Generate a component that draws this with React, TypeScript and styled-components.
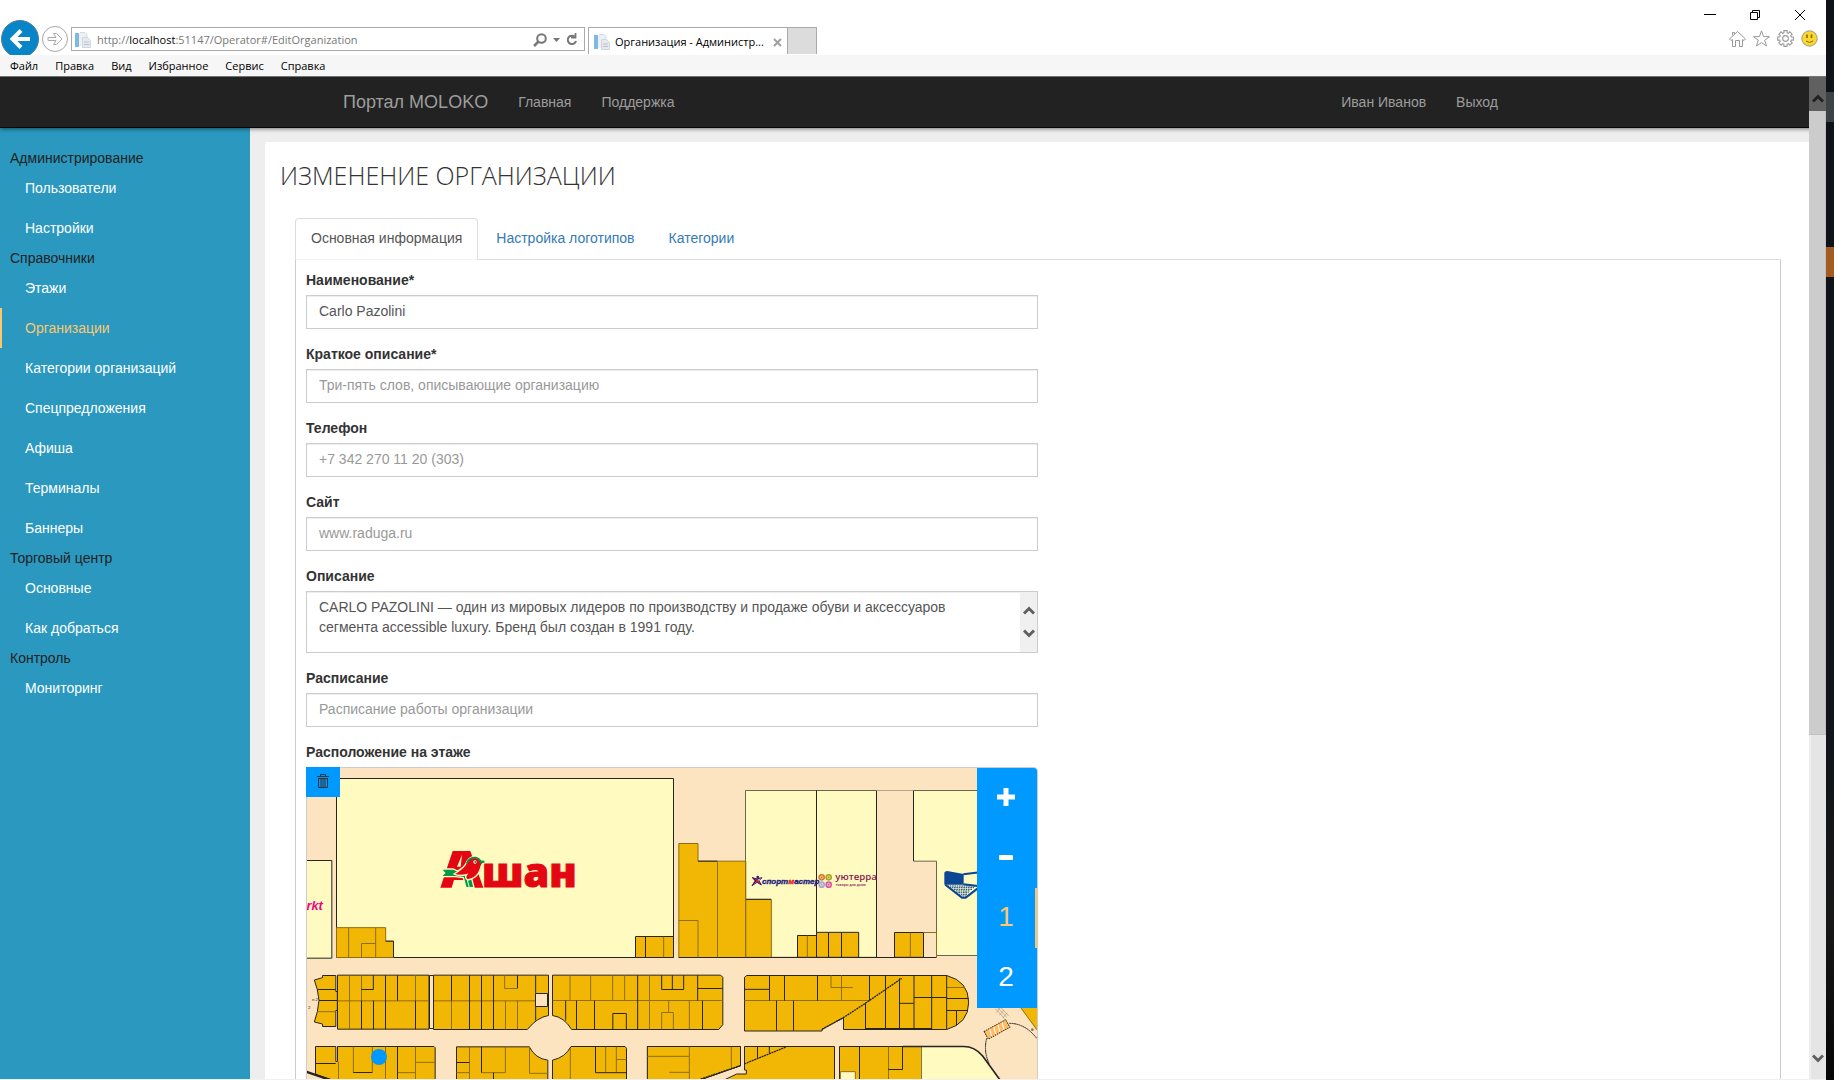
import React from "react";
import styled, { createGlobalStyle, css } from "styled-components";

const UI_FONT = '"Open Sans", "Noto Sans", sans-serif';
const PAGE_FONT = '"Liberation Sans", Arial, sans-serif';

const GlobalStyle = createGlobalStyle`
  *, *::before, *::after { box-sizing: border-box; }
  html, body, #root { height: 100%; }
  body { margin: 0; overflow: hidden; font: 14px/20px ${PAGE_FONT}; color: #333; background: #fff; }
  button, input, textarea { font: inherit; }
  a { text-decoration: none; }
`;

/* ---------- desktop and browser window ---------- */

const Desktop = styled.div`
  display: flex;
  height: 100vh;
`;

const Wallpaper = styled.div`
  flex: 0 0 8px;
  background:
    linear-gradient(#3c4346, #3c4346) 0 92px / 100% 30px no-repeat,
    linear-gradient(#a35c22, #a35c22) 0 247px / 100% 30px no-repeat,
    linear-gradient(#0d1318, #0f151a 70%, #181818 85%, #050505);
`;

const Browser = styled.div`
  flex: 1;
  min-width: 0;
  display: flex;
  flex-direction: column;
  border-bottom: 1px solid #f0f0f0;
`;

const TitleBar = styled.header`
  flex: 0 0 55px;
  display: flex;
  justify-content: space-between;
  background: #fff;
  font: 11px/16px ${UI_FONT};
  overflow: hidden;
`;

const Toolbar = styled.div`
  display: flex;
  align-items: flex-start;
  padding: 20px 0 0 1px;
`;

const RoundButton = styled.button<{ $size: number; $primary?: boolean }>`
  flex: none;
  display: grid;
  place-items: center;
  width: ${(p) => p.$size}px;
  height: ${(p) => p.$size}px;
  padding: 0;
  border-radius: 50%;
  border: 1px solid ${(p) => (p.$primary ? "#4b7f9c" : "#a8a8a8")};
  background: ${(p) => (p.$primary ? "#0785c7" : "#fff")};
  margin: ${(p) => (p.$primary ? "0" : "6px 3px 0 3px")};
`;

const AddressBar = styled.form`
  display: flex;
  align-items: center;
  gap: 6px;
  width: 514px;
  height: 24px;
  margin: 7px 3px 0 0;
  padding: 1px 6px 0 3px;
  border: 1px solid #aaa;
  background: #fff;
`;

const Url = styled.div`
  flex: 1;
  color: #777;
  white-space: nowrap;
  b { font-weight: 400; color: #000; }
`;

const PlainButton = styled.button`
  display: grid;
  place-items: center;
  padding: 0;
  border: 0;
  background: none;
  color: #777;
`;

const Tab = styled.div`
  display: flex;
  align-items: center;
  gap: 5px;
  width: 200px;
  height: 27px;
  margin-top: 7px;
  padding: 2px 5px 0;
  border: solid #aaa;
  border-width: 1px 1px 0;
  color: #000;
`;

const TabTitle = styled.span`
  flex: 1;
  white-space: nowrap;
`;

const NewTab = styled.button`
  width: 29px;
  height: 27px;
  margin-top: 7px;
  padding: 0;
  border: solid #aaa;
  border-width: 1px 1px 0 0;
  background: #dcdcdc;
`;

const WindowSide = styled.div`
  display: flex;
  flex-direction: column;
  align-items: flex-end;
  justify-content: space-between;
  padding: 8px 8px 8px 0;
`;

const WindowControls = styled.div`
  display: flex;
  gap: 33px;
  padding-right: 12px;
`;

const BrowserTools = styled.div`
  display: flex;
  gap: 7px;
`;

const MenuBar = styled.nav`
  flex: 0 0 22px;
  display: flex;
  align-items: center;
  gap: 17px;
  padding-left: 10px;
  background: #f6f6f6;
  border-bottom: 1px solid #707573;
  font: 11px/16px ${UI_FONT};
`;

const MenuItem = styled.button`
  padding: 0;
  border: 0;
  background: none;
  color: #000;
`;

/* ---------- page ---------- */

const Viewport = styled.div`
  position: relative;
  flex: 1;
  min-height: 0;
  display: flex;
  flex-direction: column;
  overflow: hidden;
`;

const Navbar = styled.header`
  flex: none;
  z-index: 1;
  background: #222;
  border-bottom: 1px solid #080808;
  box-shadow: 0 1px 4px rgba(0, 0, 0, 0.5);
`;

const NavContainer = styled.div`
  display: flex;
  align-items: center;
  gap: 30px;
  max-width: 1170px;
  height: 50px;
  margin: 0 auto;
  padding-left: 15px;
`;

const Brand = styled.a`
  font-size: 18px;
  color: #9d9d9d;
`;

const NavLink = styled.a<{ $push?: boolean }>`
  color: #9d9d9d;
  ${(p) => p.$push && "margin-left: auto;"}
`;

const Body = styled.div`
  flex: 1;
  min-height: 0;
  display: flex;
  padding-right: 17px;
  background: #eee;
`;

const Sidebar = styled.nav`
  flex: 0 0 250px;
  padding-top: 20px;
  background: #2a98bf;
`;

const SideHeading = styled.div`
  padding-left: 10px;
  color: #222;
`;

const SideLink = styled.a<{ $active?: boolean }>`
  display: block;
  height: 40px;
  padding-left: 23px;
  line-height: 40px;
  color: ${(p) => (p.$active ? "#f9c870" : "#fff")};
  border-left: 2px solid ${(p) => (p.$active ? "#f9c870" : "transparent")};
`;

const Panel = styled.main`
  flex: 1;
  min-width: 0;
  margin: 14px 0 0 15px;
  padding: 16px 28px 0 15px;
  background: #fff;
  border-radius: 3px 0 0 0;
  overflow: hidden;
`;

const Title = styled.h1`
  margin: 0 0 25px;
  font: 300 25px/35px ${UI_FONT};
  color: #333;
`;

const TabList = styled.div`
  display: flex;
  gap: 2px;
  margin-left: 15px;
  border-bottom: 1px solid #ddd;
`;

const PageTab = styled.button<{ $active?: boolean }>`
  height: 42px;
  margin-bottom: -1px;
  padding: 0 15px 2px;
  border: 1px solid transparent;
  border-radius: 4px 4px 0 0;
  background: none;
  color: #337ab7;
  ${(p) =>
    p.$active &&
    css`
      color: #555;
      background: #fff;
      border-color: #ddd #ddd #f4f4f4;
    `}
`;

const TabPanel = styled.section`
  margin-left: 15px;
  padding: 10px;
  border: solid #ccc;
  border-width: 0 1px;
`;

const Form = styled.form`
  width: 50%;
`;

const Field = styled.div`
  margin-bottom: 15px;
`;

const labelStyle = css`
  display: block;
  margin-bottom: 5px;
  font-weight: 700;
  color: #333;
`;

const Label = styled.label`
  ${labelStyle}
`;

const MapLabel = styled.div`
  ${labelStyle}
`;

const boxStyle = css`
  border: 1px solid #ccc;
  background: #fff;
  box-shadow: inset 0 1px 1px rgba(0, 0, 0, 0.075);
`;

const TextInput = styled.input`
  ${boxStyle}
  display: block;
  width: 100%;
  height: 34px;
  padding: 0 12px 2px;
  border-radius: 0;
  color: #555;
  outline: 0;
  &::placeholder { color: #999; opacity: 1; }
`;

const TextAreaBox = styled.div`
  ${boxStyle}
  display: flex;
  height: 62px;
`;

const TextArea = styled.textarea`
  flex: 1;
  min-width: 0;
  padding: 5px 12px;
  border: 0;
  outline: 0;
  resize: none;
  overflow: hidden;
  background: none;
  color: #555;
`;

const TextScroller = styled.div`
  flex: 0 0 17px;
  display: flex;
  flex-direction: column;
  align-items: center;
  justify-content: center;
  gap: 14px;
  background: #f0f0f0;
  color: #606060;
`;

/* ---------- page scrollbar ---------- */

const Scrollbar = styled.div`
  position: absolute;
  z-index: 2;
  inset: 0 0 0 auto;
  width: 17px;
  display: grid;
  grid-template-rows: 34px 624fr 310fr 34px;
  background: #e5e5e5;
  border-left: 2px solid #eee;
`;

const ScrollUp = styled.div`
  margin-left: -2px;
  display: grid;
  place-items: center;
  padding-top: 8px;
  background: #606060;
  color: #222;
`;

const Thumb = styled.div`
  margin-left: -2px;
  background: #ccc;
  border: solid #c0c0c0;
  border-width: 0 1px 1px 0;
`;

const ScrollDown = styled.div`
  grid-row: 4;
  display: grid;
  place-items: center;
  padding: 0 2px 8px 0;
  color: #606060;
`;

/* ---------- map ---------- */

const MapFrame = styled.div`
  position: relative;
  height: 402px;
  border: 1px solid #ccc;
  border-radius: 0 4px 0 0;
`;

const MapSvg = styled.svg`
  display: block;
  width: 100%;
  height: 100%;
`;

const DeleteButton = styled.button`
  position: absolute;
  top: -1px;
  left: -1px;
  display: grid;
  place-items: center;
  width: 34px;
  height: 30px;
  padding: 0 0 3px;
  border: 0;
  background: #09f;
`;

const MapControls = styled.div`
  position: absolute;
  top: 0;
  right: 0;
  width: 60px;
  background: #09f;
  border-radius: 0 3px 0 0;
`;

const MapButton = styled.button<{ $active?: boolean }>`
  display: grid;
  place-items: center;
  width: 60px;
  height: 60px;
  padding: 0 0 2px;
  border: 0;
  border-right: 2px solid ${(p) => (p.$active ? "#f9c870" : "transparent")};
  background: none;
  color: ${(p) => (p.$active ? "#f9c870" : "#fff")};
  font-size: 28px;
  line-height: 32px;
`;

/* ---------- icons ---------- */

const Chevron = ({ down }: { down?: boolean }) => (
  <svg width="12" height="9" viewBox="0 0 12 9" fill="none" stroke="currentColor" strokeWidth="3">
    <path d={down ? "M1 1.5 6 6.5 11 1.5" : "M1 7.5 6 2.5 11 7.5"} />
  </svg>
);

const PageIcon = () => (
  <svg width="16" height="16" viewBox="0 0 16 16">
    <path d="M0 1h4v14H0z" fill="#7fb9e2" />
    <path d="M4 1h8v13H4z" fill="#edf1f5" />
    <path d="M5 .5h5l2 2V8" fill="none" stroke="#d5dae0" />
    <path d="M7.500 5.500h5l3 3v7h-8z" fill="#e6eaef" stroke="#d0d6dd" />
    <path d="M9 10h5M9 12.500h5" stroke="#b9c2cc" />
  </svg>
);

const TrashIcon = () => (
  <svg width="12" height="14" viewBox="0 0 12 14" fill="none" stroke="#333">
    <path d="M0 2.500h12M3.500 2V.5h5V2M1.500 4v9.500h9V4M1 4.500h10" />
    <path d="M4 5v8M6 5v8M8 5v8" />
  </svg>
);

const gearPath = (() => {
  const pts: string[] = [];
  for (let i = 0; i < 8; i++) {
    const a = (i * Math.PI) / 4;
    [[-0.27, 5.6], [-0.2, 7.5], [0.2, 7.5], [0.27, 5.6]].forEach(([d, r]) =>
      pts.push(`${(8 + r * Math.sin(a + d)).toFixed(1)} ${(8 - r * Math.cos(a + d)).toFixed(1)}`)
    );
  }
  return `M${pts.join("L")}Z`;
})();

/* ---------- floor plan ---------- */

const GOLD = "#f2b705";
const PALE = "#fffac0";
const FLOOR = "#fde4c0";
const INK = "#262522";
const SEAM = "#8f6e0c";

const WestWing = () => (
  <g strokeWidth="3">
    <path d="M140 85.500H1150.500V622.500H139.500V85.500M40 331.500H125.500V624.500H40" fill={PALE} stroke={INK} />
    <g fill={GOLD} stroke={INK}>
      <path d="M139.500 533V622.500H310.500V573.500H287V533z" stroke={SEAM} />
      <path d="M1036.500 559.500H1150.500V622.500H1036.500z" />
      <path d="M97.500 676.500H137.500V724.500H142V781.500H137.500V829.500H97.500V822L73 816 82 785 87 751 82 719 73 690 97.500 683z" />
      <path d="M142.500 675.500H417V837.500H142.500z" />
      <path d="M430.500 675.500H775.500V796.500Q741 802 712 838.500H430.500z" />
      <path d="M787.500 675.500H1292L1298.500 682V824L1286 838.500H845Q822 801 787.500 796.500z" />
      <path d="M76.500 889.500H137.500V934.500H142.500V889.500H432L435.500 893V1010H180L76.500 973z" />
      <path d="M499.500 890.500H718Q736 926 773.500 930.500V1010H499.500z" />
      <path d="M787.500 1010V930.500Q826 922 843 889.500H1005L1009.500 895V1010z" />
      <path d="M1072.500 889.500H1351.500V947L1200 1000H1072.500z" />
    </g>
    <path
      fill="none"
      stroke={SEAM}
      d="M176 533V622M257 533V622M214.500 622V580.500H257M1121 560V622
      M82 785H137M142 752.500H417M178.500 676V838M214.500 676V838M376.500 676V838
      M430 752.500H737M646.500 752V838M484.500 752V838M644 676V715.500H682M682.500 752V838
      M788 751.500H1298M840 676V752M902 676V752M968 676V752M1004 676V752M1078.500 676V838M1136 752V787M1115 838V787.500H1150V838M1198 752V838
      M145.500 935V990M190 890V968M286.500 890V990M376.500 890V990M376 937H435M322 968H376M247 890V968
      M538.500 890V990M499 968H538M574 968H646V890M718.500 890V970H773M841 895V990M947 890V968M979 890V968M979 928.500H1009
      M1072 919H1198M1138 967H1198M1198.500 890V990M1324 890V957"
    />
    <path
      fill="none"
      stroke={INK}
      d="M287 573.500H310.500V622M1066.500 560V622M82 718.500H137M87 751.500H142
      M214 718.500H250V676M250.500 752V838M286.500 676V838M322.500 676V752M376.500 752V838M214.500 752V838
      M484.500 676V752M538.500 676V838M574.500 676V838M610.500 676V838M682.500 676V715M737 676V730M737 769V812
      M827 752V812M859.500 752V838M913.500 752V838M968.500 838V790.500H1009V838M1043 676V838M1115 676V718.500H1181V676M1147 676V718M1223 676V752M1223 715.500H1298M1237.500 752V838
      M76 940.500H137M190 967.500H247M322.500 890V990M499 937.500H538M574.500 890V968M610.500 968V990
      M916.500 890V968H1009M1072 955.500H1138V990"
    />
    <path d="M418.500 676.500H430.500V835.500H418.500z" fill={FLOOR} stroke={INK} />
    <path d="M736.500 730.500H772.500V769.500H736.500z" fill={FLOOR} stroke={INK} />
    <path d="M48 965 130 993" stroke={INK} strokeWidth="7" />
    <text x="98" y="480" textAnchor="end" fontFamily={PAGE_FONT} fontSize="38" fontWeight="700" fontStyle="italic" fill="#ec008c">
      rkt
    </text>
    <text x="84" y="752" textAnchor="end" fontFamily={PAGE_FONT} fontSize="13" fill={INK}>н.2</text>
    <text x="54" y="776" fontFamily={PAGE_FONT} fontSize="13" fill={INK}>2</text>
  </g>
);

const EastWing = () => (
  <g strokeWidth="3" transform="translate(1140 0)">
    <path d="M226.500 121.500H619.500V622H226.500zM1000 121.500H730.500V333.500H799.500V616.500H1000" fill={PALE} stroke="#6b6650" />
    <path d="M439.500 121V622M619.500 121V622M730.500 121V333" stroke={INK} />
    <path d="M620 121.500H730" stroke="#b5a58c" />
    <g fill={GOLD} stroke={INK}>
      <path d="M26.500 280.500H84V333.500H227V622.500H26.500z" stroke={SEAM} />
      <path d="M227 448H304V622H227z" stroke={SEAM} />
      <path d="M382.500 556.500H439.500V622H382.500zM439.500 547H566V622H439.500zM673.500 547.500H760.500V622H673.500z" />
      <path d="M223.500 682 230 676.500H830Q896 694 896 757T830 838.500H520.500V803L456 838V843H223.500z" />
      <path d="M-68 889.500H211.500V947L90 990H-68z" />
      <path d="M223.500 889.500H493.500V1010H120L200 972H229V960H223.500z" />
      <path d="M508.500 889.500H755V1010H508.500z" />
    </g>
    <path d="M26 622.500H800M84 333.500H142M228 448H303" stroke={INK} fill="none" />
    <path
      fill="none"
      stroke={SEAM}
      d="M26 511.500H84V622M142.500 334V622M412 557V622M721 548V622M761 547.500H799.500V622.500
      M223 751.500H598M514.500 676V752M483 676V712.500H548M830 712.500H884M-68 919H58M-2 967H58M58 890V990M184 890V955M655.500 890V990M227 334V622"
    />
    <path
      fill="none"
      stroke={INK}
      d="M475.500 547V622M514.500 547V622
      M298.500 676V752M343.500 676V752M442.500 676V752M223 718H298M319.500 752V842M370.500 752V842M598.500 676V752M646.500 676V838M586.500 760V838
      M688.500 685V838M688 760H731M732 676V838M785 676V838M830 676V838M732 742.500H830M830 745.500H896M830 781.500H893M859.500 781V826M586 835.500H785
      M262.500 890V925M298 890V910M568.500 890V990M697.500 890V958.500H655"
    />
    <path d="M456 838 520 803 586 760 695 685M223 942 348 891M92 987 211 947" fill="none" stroke={INK} strokeWidth="4" strokeDasharray="6 2" />
    <path d="M511 965H556V1010H511z" fill={PALE} stroke={SEAM} />
    <path d="M755 891H880Q912 891 938 920L988 987 1010 1020H755z" fill={PALE} />
    <path d="M698 889.500H880Q914 889 938 918L988 987 1005 1010" fill="none" stroke={INK} strokeWidth="5" />
    <path d="M950 865Q940 905 958 942M1018 820Q1066 820 1101 866" fill="none" stroke={INK} strokeDasharray="6 1" />
    <path d="M1050 770H1105V845z" fill={GOLD} stroke={SEAM} />
    <g transform="rotate(-29 981 838)">
      <path d="M944 825H1018V851H944z" fill="#ffbd63" stroke={INK} strokeDasharray="4 3" />
      <path d="M957 848 962 828M971 848 976 828M985 848 990 828M999 848 1004 828" stroke="#fff" />
    </g>
    <path d="M976 776 1004 806M984 774 1010 802M992 772 1016 798M978 788 992 772M988 796 1002 780M998 804 1012 788" stroke="#a99a86" fill="none" strokeWidth="2" />
    <circle cx="1087" cy="839" r="4" fill="#8a7450" />
  </g>
);

const AuchanLogo = () => (
  <g>
    <g fill="#e30613" fontFamily={UI_FONT} fontWeight="800">
      <path d="M451 413 488 303H541L580 413H540L533 390H492L485 413zM501 350H512L516 314z" fillRule="evenodd" />
      <text x="576" y="412" fontSize="124" stroke="#e30613" strokeWidth="3">шан</text>
    </g>
    <path d="M453 357H489L503 363 530 345 534 385H545L552 413H528L520 383 496 380H453L464 369z" fill="#009b48" stroke={PALE} strokeWidth="4" />
    <path d="M531 386 538 413" stroke={PALE} strokeWidth="3" />
    <path
      d="M492 372Q514 360 526 344 536 318 556 320 574 322 578 340 572 348 570 360 562 384 534 390 522 384 530 374 508 380 492 372z"
      fill="#e30613"
      stroke={PALE}
      strokeWidth="4"
    />
    <path d="M530 340Q538 321 556 323 566 324 571 333L583 335 571 339" fill="none" stroke="#009b48" strokeWidth="5" />
    <circle cx="555" cy="336" r="5" fill="#fff" />
    <circle cx="556" cy="336" r="3" fill="#009b48" />
  </g>
);

const StoreLogos = () => (
  <g transform="translate(1140 0)">
    <path d="M245 382 260 386 270 381 264 391 275 404 259 396 245 408 253 392z" fill="#e31e24" />
    <path d="M246 407 258 392 247 383 261 387 276 383 267 392 274 405 261 397z" fill="none" stroke="#20207c" strokeWidth="3" />
    <circle cx="263" cy="381" r="4" fill="#20207c" />
    <text x="276" y="401" fontFamily={PAGE_FONT} fontSize="24" fontWeight="700" fontStyle="italic" fill="#20207c" stroke="#20207c">
      спорт<tspan fill="#e31e24" stroke="#e31e24">м</tspan>астер
    </text>
    {[
      [455, 382, "#d9772f"],
      [476, 382, "#a9a61d"],
      [455, 404, "#a7a4cf"],
      [476, 404, "#d85aa6"],
    ].map(([x, y, c]) => (
      <g key={`${x}-${y}`}>
        <circle cx={x} cy={y} r="10" fill={c as string} />
        <circle cx={x} cy={y} r="4" fill="none" stroke="#fff2cf" strokeWidth="2" />
      </g>
    ))}
    <text x="496" y="391" fontFamily={UI_FONT} fontSize="29" fontWeight="600" fill="#861a50">уютерра</text>
    <text x="497" y="409" fontFamily={UI_FONT} fontSize="10" fontWeight="700" fill="#a0456f">товары для дома</text>
    <path d="M823 368Q824 363 832 363L881 372V404H823z" fill="#0b4596" />
    <path d="M826 404 876 443H887L930 410" fill="none" stroke="#0b4596" strokeWidth="6" />
    <path d="M880 373 930 367M880 403 930 409" fill="none" stroke="#0b4596" strokeWidth="6" />
    <path
      d="M832 408H916M838 413H912M845 418H906M851 423H900M858 428H896M865 433H892M870 438H888"
      stroke="#0b4596"
      strokeWidth="3"
      strokeDasharray="5 2"
    />
  </g>
);

const FloorPlan = () => (
  <MapSvg viewBox="51 54 2190 1200" preserveAspectRatio="xMinYMin slice" role="img" aria-label="План этажа">
    <rect x="0" y="0" width="2400" height="1300" fill={FLOOR} />
    <WestWing />
    <EastWing />
    <AuchanLogo />
    <StoreLogos />
    <circle cx="267" cy="921" r="24" fill="#09f" />
  </MapSvg>
);

/* ---------- content ---------- */

const MENU = ["Файл", "Правка", "Вид", "Избранное", "Сервис", "Справка"];

const SECTIONS = [
  { title: "Администрирование", items: ["Пользователи", "Настройки"] },
  {
    title: "Справочники",
    items: ["Этажи", "Организации", "Категории организаций", "Спецпредложения", "Афиша", "Терминалы", "Баннеры"],
  },
  { title: "Торговый центр", items: ["Основные", "Как добраться"] },
  { title: "Контроль", items: ["Мониторинг"] },
];

type InputProps = { id: string; label: string; value?: string; placeholder?: string };

const InputField = ({ id, label, value, placeholder }: InputProps) => (
  <Field>
    <Label htmlFor={id}>{label}</Label>
    <TextInput id={id} type="text" defaultValue={value} placeholder={placeholder} />
  </Field>
);

const BrowserHeader = () => (
  <>
    <TitleBar>
      <Toolbar>
        <RoundButton $size={38} $primary aria-label="Назад">
          <svg width="22" height="20" viewBox="0 0 22 20" fill="none" stroke="#fff" strokeWidth="4">
            <path d="M21 10H4M12 1.500 3.500 10 12 18.500" />
          </svg>
        </RoundButton>
        <RoundButton $size={26} aria-label="Вперёд">
          <svg width="16" height="14" viewBox="0 0 16 14" fill="none" stroke="#aaa">
            <path d="M1 5.500H9L6.500 1.500H9.500L15 7 9.500 12.500H6.500L9 8.500H1z" />
          </svg>
        </RoundButton>
        <AddressBar>
          <PageIcon />
          <Url>
            http://<b>localhost</b>:51147/Operator#/EditOrganization
          </Url>
          <PlainButton type="button" aria-label="Поиск">
            <svg width="14" height="14" viewBox="0 0 14 14" fill="none" stroke="currentColor" strokeWidth="2">
              <circle cx="8.500" cy="5.500" r="4.300" />
              <path d="M5.500 8.500 1 13" strokeWidth="2.500" />
            </svg>
          </PlainButton>
          <PlainButton type="button" aria-label="Список адресов">
            <svg width="7" height="4" viewBox="0 0 7 4"><path d="M0 0h7L3.500 4z" fill="currentColor" /></svg>
          </PlainButton>
          <PlainButton type="button" aria-label="Обновить">
            <svg width="12" height="13" viewBox="0 0 12 13" fill="none" stroke="currentColor" strokeWidth="2">
              <path d="M8.500 3.500A4.200 4.200 0 1 0 10 8" />
              <path d="M5 4.500H9.500V0" strokeWidth="1.800" />
            </svg>
          </PlainButton>
        </AddressBar>
        <Tab>
          <PageIcon />
          <TabTitle>Организация - Администр...</TabTitle>
          <PlainButton aria-label="Закрыть вкладку">
            <svg width="9" height="9" viewBox="0 0 9 9" stroke="#a0a0a0" strokeWidth="2"><path d="M1 1 8 8M8 1 1 8" /></svg>
          </PlainButton>
        </Tab>
        <NewTab aria-label="Новая вкладка" />
      </Toolbar>
      <WindowSide>
        <WindowControls>
          {["M0 6.500H12", "M1.500 4.500H8.500V11.500H1.500zM3.500 4.500V2.500H10.500V9.500H8.500", "M1 2 11 12M11 2 1 12"].map((d, i) => (
            <PlainButton key={d} aria-label={["Свернуть", "Восстановить", "Закрыть"][i]}>
              <svg width="12" height="13" viewBox="0 0 12 13" fill="none" stroke="#000"><path d={d} /></svg>
            </PlainButton>
          ))}
        </WindowControls>
        <BrowserTools>
          <PlainButton aria-label="Домашняя страница">
            <svg width="17" height="17" viewBox="0 0 17 17" fill="none" stroke="#999">
              <path d="M.5 9 8.500 1.500 16.500 9 15 10.500 13.500 9.500V16.500H10.500V10.500H6.500V16.500H3.500V9.500L2 10.500zM3.500 5.500V2.500H5.500V4" />
            </svg>
          </PlainButton>
          <PlainButton aria-label="Избранное">
            <svg width="17" height="17" viewBox="0 0 17 17" fill="none" stroke="#999">
              <path d="M8.500.8 10.500 6.500 16.500 6.700 11.700 10.200 13.500 16 8.500 12.600 3.500 16 5.300 10.200.5 6.700 6.500 6.500z" />
            </svg>
          </PlainButton>
          <PlainButton aria-label="Сервис">
            <svg width="17" height="17" viewBox="0 0 16 16" fill="none" stroke="#999">
              <path d={gearPath} />
              <circle cx="8" cy="8" r="2.700" />
            </svg>
          </PlainButton>
          <PlainButton aria-label="Отправить отзыв">
            <svg width="17" height="17" viewBox="0 0 17 17">
              <circle cx="8.500" cy="8.500" r="7.700" fill="#fbd72b" stroke="#999" />
              <path d="M6 4.500V8M10.500 4.500V8" stroke="#806a12" strokeWidth="1.600" />
              <path d="M5 11Q8.500 14 12 11" fill="none" stroke="#806a12" />
            </svg>
          </PlainButton>
        </BrowserTools>
      </WindowSide>
    </TitleBar>
    <MenuBar>
      {MENU.map((m) => (
        <MenuItem key={m}>{m}</MenuItem>
      ))}
    </MenuBar>
  </>
);

export default function App() {
  return (
    <>
      <GlobalStyle />
      <Desktop>
        <Browser>
          <BrowserHeader />
          <Viewport>
            <Navbar>
              <NavContainer>
                <Brand href="#">Портал MOLOKO</Brand>
                <NavLink href="#">Главная</NavLink>
                <NavLink href="#">Поддержка</NavLink>
                <NavLink href="#" $push>Иван Иванов</NavLink>
                <NavLink href="#">Выход</NavLink>
              </NavContainer>
            </Navbar>
            <Body>
              <Sidebar>
                {SECTIONS.map((s) => (
                  <React.Fragment key={s.title}>
                    <SideHeading>{s.title}</SideHeading>
                    {s.items.map((item) => (
                      <SideLink key={item} href="#" $active={item === "Организации"}>
                        {item}
                      </SideLink>
                    ))}
                  </React.Fragment>
                ))}
              </Sidebar>
              <Panel>
                <Title>ИЗМЕНЕНИЕ ОРГАНИЗАЦИИ</Title>
                <TabList role="tablist">
                  <PageTab role="tab" aria-selected $active>Основная информация</PageTab>
                  <PageTab role="tab">Настройка логотипов</PageTab>
                  <PageTab role="tab">Категории</PageTab>
                </TabList>
                <TabPanel role="tabpanel">
                  <Form>
                    <InputField id="name" label="Наименование*" value="Carlo Pazolini" />
                    <InputField id="short" label="Краткое описание*" placeholder="Три-пять слов, описывающие организацию" />
                    <InputField id="phone" label="Телефон" placeholder="+7 342 270 11 20 (303)" />
                    <InputField id="site" label="Сайт" placeholder="www.raduga.ru" />
                    <Field>
                      <Label htmlFor="description">Описание</Label>
                      <TextAreaBox>
                        <TextArea
                          id="description"
                          defaultValue={
                            "CARLO PAZOLINI — один из мировых лидеров по производству и продаже обуви и аксессуаров\nсегмента accessible luxury. Бренд был создан в 1991 году."
                          }
                        />
                        <TextScroller>
                          <Chevron />
                          <Chevron down />
                        </TextScroller>
                      </TextAreaBox>
                    </Field>
                    <InputField id="schedule" label="Расписание" placeholder="Расписание работы организации" />
                    <MapLabel>Расположение на этаже</MapLabel>
                    <MapFrame>
                      <FloorPlan />
                      <DeleteButton type="button" aria-label="Удалить">
                        <TrashIcon />
                      </DeleteButton>
                      <MapControls>
                        <MapButton type="button" aria-label="Приблизить">
                          <svg width="18" height="18" viewBox="0 0 18 18" fill="#fff">
                            <path d="M6.500 0h5v6.500H18v5h-6.500V18h-5v-6.500H0v-5h6.500z" />
                          </svg>
                        </MapButton>
                        <MapButton type="button" aria-label="Отдалить">
                          <svg width="14" height="5" viewBox="0 0 14 5"><rect width="14" height="5" rx="1" fill="#fff" /></svg>
                        </MapButton>
                        <MapButton type="button" $active>1</MapButton>
                        <MapButton type="button">2</MapButton>
                      </MapControls>
                    </MapFrame>
                  </Form>
                </TabPanel>
              </Panel>
            </Body>
            <Scrollbar>
              <ScrollUp><Chevron /></ScrollUp>
              <Thumb />
              <ScrollDown><Chevron down /></ScrollDown>
            </Scrollbar>
          </Viewport>
        </Browser>
        <Wallpaper />
      </Desktop>
    </>
  );
}
